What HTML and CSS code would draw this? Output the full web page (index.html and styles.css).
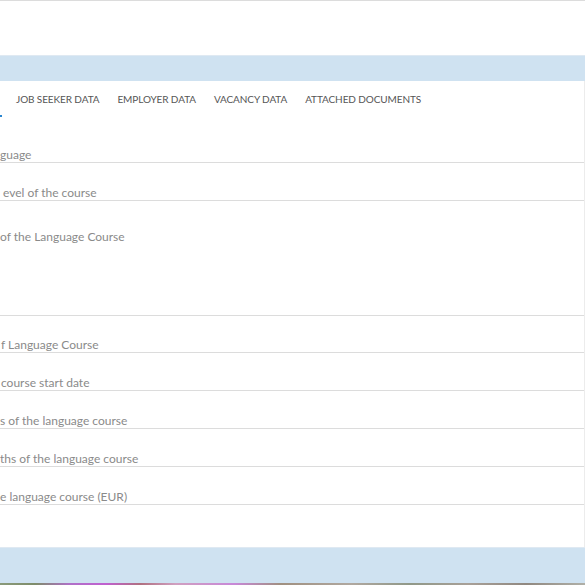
FILE: index.html
```html
<!DOCTYPE html>
<html>
<head>
<meta charset="utf-8">
<link rel="stylesheet" href="styles.css">
</head>
<body>
<div class="page">
  <div class="top"></div>
  <div class="band"></div>
  <div class="panel">
    <nav class="tabs">
      <span class="tab active"></span>
      <span class="tab">JOB SEEKER DATA</span>
      <span class="tab">EMPLOYER DATA</span>
      <span class="tab">VACANCY DATA</span>
      <span class="tab">ATTACHED DOCUMENTS</span>
    </nav>
    <div class="form">
      <div class="field"><span class="label">guage</span></div>
      <div class="field"><span class="label off3">evel of the course</span></div>
      <div class="field area"><span class="label">of the Language Course</span></div>
      <div class="field"><span class="label off1">f Language Course</span></div>
      <div class="field"><span class="label off1">course start date</span></div>
      <div class="field"><span class="label">s of the language course</span></div>
      <div class="field"><span class="label">ths of the language course</span></div>
      <div class="field"><span class="label">e language course (EUR)</span></div>
    </div>
    <div class="spacer"></div>
  </div>
  <div class="band bottom"></div>
  <div class="strip"></div>
</div>
</body>
</html>
```

FILE: styles.css
```css
html, body {
  margin: 0;
  padding: 0;
  background: #ffffff;
}
body {
  font-family: Lato, "Open Sans", "Liberation Sans", sans-serif;
  width: 585px;
  height: 585px;
  overflow: hidden;
}
.page {
  display: flex;
  flex-direction: column;
  width: 585px;
}
.top {
  border-top: 1px solid #dcdcdc;
  box-sizing: border-box;
  height: 55px;
}
.band {
  height: 26px;
  background: #cfe2f1;
  border-top: 1px solid #dfe9f2;
  box-sizing: border-box;
}
.panel {
  border-right: 1px solid #ececec;
  display: flex;
  flex-direction: column;
}
.tabs {
  display: flex;
  align-items: center;
  height: 36px;
}
.tab {
  font-size: 10px;
  color: #555555;
  padding: 0 9px;
  letter-spacing: -0.1px;
  white-space: nowrap;
  line-height: 38px;
}
.tab.active {
  padding: 0;
  width: 7px;
  align-self: stretch;
  position: relative;
}
.tab.active::after {
  content: "";
  position: absolute;
  left: 0;
  bottom: 0;
  width: 2px;
  height: 2px;
  background: #2a86d0;
}
.form {
  display: flex;
  flex-direction: column;
  padding-top: 8px;
}
.field {
  height: 37.8px;
  box-sizing: border-box;
  border-bottom: 1px solid #dcdcdc;
  display: flex;
  align-items: flex-end;
  padding-bottom: 0;
}
.field.area {
  height: 115px;
  align-items: flex-start;
  padding-top: 29px;
}
.label {
  font-size: 12px;
  line-height: 14px;
  color: #8a8a8a;
  white-space: nowrap;
}
.off1 { padding-left: 1px; }
.off3 { padding-left: 3px; }
.spacer {
  height: 42px;
}
.bottom {
  height: 36px;
}
.strip {
  height: 3px;
  background: linear-gradient(90deg, #8a9a7a 0%, #7e8c6a 6%, #b070c8 12%, #c060d0 18%, #b07080 24%, #d0a0c0 30%, #c888d8 40%, #a09080 48%, #b0a8a0 60%, #909888 70%, #a8a098 80%, #908880 90%, #b0b0a8 100%);
}
```
